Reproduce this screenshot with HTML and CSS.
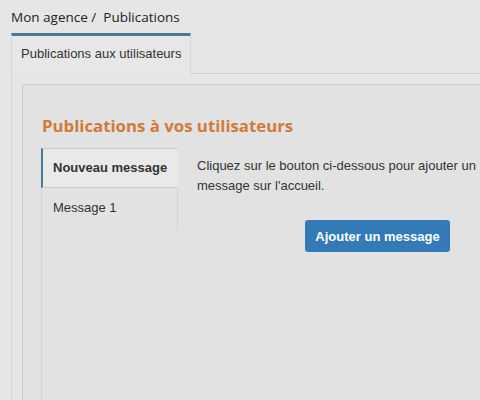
FILE: index.html
```html
<!DOCTYPE html>
<html lang="fr">
<head>
  <meta charset="UTF-8" />
  <meta name="viewport" content="width=device-width, initial-scale=1.0" />
  <title>Publications</title>
  <link rel="stylesheet" href="styles.css">
</head>
<body>
  <div class="breadcrumb">Mon agence /&nbsp; Publications</div>

  <div class="tab-bar">
    <div class="tab active">Publications aux utilisateurs</div>
  </div>

  <div class="tab-content">
    <div class="panel">
      <h2>Publications à vos utilisateurs</h2>
      <div class="panel-body">
        <ul class="side-tabs">
          <li class="side-tab active">Nouveau message</li>
          <li class="side-tab">Message 1</li>
        </ul>
        <div class="side-content">
          <p>Cliquez sur le bouton ci-dessous pour ajouter un message sur l'accueil.</p>
          <button class="btn-add">Ajouter un message</button>
        </div>
      </div>
    </div>
  </div>
</body>
</html>
```

FILE: styles.css
```css
html, body {
  height: 100%;
}
body {
  margin: 0;
  background: #e6e6e6;
  font-family: 'Liberation Sans', Arial, sans-serif;
  color: #333;
  overflow: hidden;
}
.breadcrumb {
  font-family: 'Open Sans', sans-serif;
  font-size: 13.5px;
  color: #222;
  height: 33px;
  line-height: 34px;
  padding-left: 11px;
  box-sizing: border-box;
}
.tab-bar {
  margin-left: 11px;
  display: flex;
  border-bottom: 1px solid #cfcfcf;
  width: 700px;
}
.tab {
  font-size: 13px;
  color: #333;
  white-space: nowrap;
  padding-left: 9px;
  line-height: 36px;
  border-top: 3px solid #4b7894;
  border-left: 1px solid #d6d6d6;
  border-right: 1px solid #d6d6d6;
  background: #e7e7e7;
  margin-bottom: -1px;
  width: 180px;
  box-sizing: border-box;
  height: 41px;
}
.tab-content {
  margin-left: 11px;
  border-left: 1px solid #d4d4d4;
  padding: 10px 0 0 10px;
  height: 400px;
  box-sizing: border-box;
}
.panel {
  border: 1px solid #cbcbcb;
  background: #e2e2e2;
  width: 700px;
  height: 100%;
  padding: 28px 0 0 18px;
  box-sizing: border-box;
}
.panel h2 {
  font-family: 'Open Sans', sans-serif;
  font-size: 16.8px;
  font-weight: bold;
  color: #d17a3a;
  margin: 0 0 9px 1px;
  line-height: 26px;
}
.panel-body {
  display: flex;
  height: 300px;
}
.side-tabs {
  list-style: none;
  margin: 0;
  padding: 0;
  width: 136px;
  border-left: 1px solid #d2d2d2;
  flex-shrink: 0;
}
.side-tab {
  font-size: 13px;
  color: #333;
  height: 38px;
  line-height: 38px;
  padding-left: 11px;
  border-right: 1px solid #d2d2d2;
  border-bottom: 1px solid #c9c9c9;
}
.side-tab.active {
  font-weight: bold;
  background: #e9e9e9;
  border-top: 1px solid #c9c9c9;
  border-left: 2px solid #4b7894;
  margin-left: -1px;
  padding-left: 10px;
  border-right-color: #e9e9e9;
}
.side-tab:last-child {
  border-bottom: none;
  height: 43px;
  line-height: 40px;
}
.side-content {
  padding: 8px 0 0 19px;
  width: 300px;
}
.side-content p {
  font-size: 13px;
  line-height: 20px;
  margin: 0 0 24px;
}
.btn-add {
  display: block;
  margin-left: 108px;
  font-family: 'Liberation Sans', Arial, sans-serif;
  font-size: 13px;
  font-weight: bold;
  color: #fff;
  background: #337ab7;
  border: none;
  border-radius: 3px;
  width: 145px;
  height: 32px;
  padding: 0;
}
```
